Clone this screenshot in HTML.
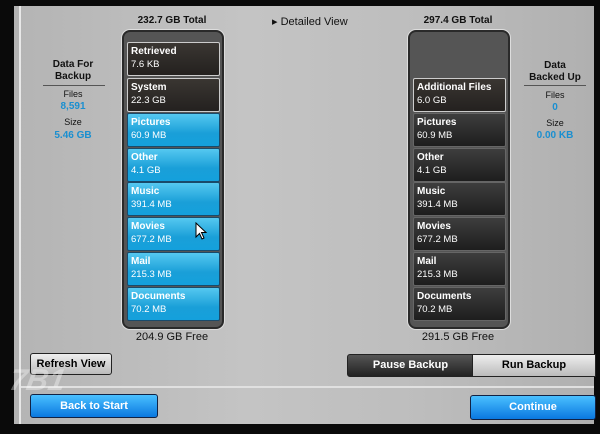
<!DOCTYPE html>
<html><head><style>
body{margin:0;width:600px;height:432px;background:#0a0a0a;position:relative;overflow:hidden;font-family:"Liberation Sans",sans-serif}
.scr{position:absolute;left:14px;top:6px;width:580px;height:418px;background:linear-gradient(90deg,#b4b4b4,#c4c4c4 40%,#bdbdbd 70%,#b0b0b0);}
.edge{position:absolute;left:19px;top:6px;width:2px;height:418px;background:#e8e8e8}
.t{position:absolute;font-size:10px;color:#111;text-align:center}
.b{font-weight:bold}
.blue{color:#1a8fd0;font-weight:bold}
.col{position:absolute;top:30px;width:98px;height:295px;border-radius:8px;background:#555;border:2px solid #2a2a2a;box-shadow:0 0 0 1px #ddd}
.it{position:absolute;left:3px;width:88px;height:30px;border:1px solid #ccc;border-radius:2px;color:#fff;font-size:9.5px;padding-left:3px;line-height:13px;padding-top:2px}
.it b{font-size:10px}
.dk{background:linear-gradient(#3a3632,#24211f)}
.bl{background:linear-gradient(#55c8f0,#1a9fd8 60%,#14a0dc);border-color:#1a4a6a}
.gr{background:linear-gradient(#3e3e3e,#1e1e1e);border-color:#666}
.btn{position:absolute;font-weight:bold;font-size:11px;text-align:center}
</style></head><body>
<div class="scr"></div><div class="edge"></div>
<div class="t b" style="left:122px;top:15px;width:100px">232.7 GB Total</div>
<div class="t" style="left:272px;top:15px;font-size:11px">▸ Detailed View</div>
<div class="t b" style="left:408px;top:15px;width:100px">297.4 GB Total</div>
<div class="t b" style="left:40px;top:59px;width:66px;line-height:12px">Data For<br>Backup</div>
<div style="position:absolute;left:43px;top:85px;width:62px;height:1px;background:#555"></div>
<div class="t" style="left:40px;top:89px;width:66px;font-size:9px">Files</div>
<div class="t blue" style="left:40px;top:101px;width:66px">8,591</div>
<div class="t" style="left:40px;top:117px;width:66px;font-size:9px">Size</div>
<div class="t blue" style="left:40px;top:130px;width:66px">5.46 GB</div>
<div class="t b" style="left:522px;top:60px;width:66px;line-height:12px">Data<br>Backed Up</div>
<div style="position:absolute;left:524px;top:85px;width:62px;height:1px;background:#555"></div>
<div class="t" style="left:522px;top:90px;width:66px;font-size:9px">Files</div>
<div class="t blue" style="left:522px;top:102px;width:66px">0</div>
<div class="t" style="left:522px;top:118px;width:66px;font-size:9px">Size</div>
<div class="t blue" style="left:522px;top:130px;width:66px">0.00 KB</div>
<div class="col" style="left:122px">
<div class="it dk" style="top:10px"><b>Retrieved</b><br>7.6 KB</div>
<div class="it dk" style="top:46px"><b>System</b><br>22.3 GB</div>
<div class="it bl" style="top:81px"><b>Pictures</b><br>60.9 MB</div>
<div class="it bl" style="top:116px"><b>Other</b><br>4.1 GB</div>
<div class="it bl" style="top:150px"><b>Music</b><br>391.4 MB</div>
<div class="it bl" style="top:185px"><b>Movies</b><br>677.2 MB</div>
<div class="it bl" style="top:220px"><b>Mail</b><br>215.3 MB</div>
<div class="it bl" style="top:255px"><b>Documents</b><br>70.2 MB</div>
</div>
<div class="col" style="left:408px">
<div class="it dk" style="top:46px"><b>Additional Files</b><br>6.0 GB</div>
<div class="it gr" style="top:81px"><b>Pictures</b><br>60.9 MB</div>
<div class="it gr" style="top:116px"><b>Other</b><br>4.1 GB</div>
<div class="it gr" style="top:150px"><b>Music</b><br>391.4 MB</div>
<div class="it gr" style="top:185px"><b>Movies</b><br>677.2 MB</div>
<div class="it gr" style="top:220px"><b>Mail</b><br>215.3 MB</div>
<div class="it gr" style="top:255px"><b>Documents</b><br>70.2 MB</div>
</div>
<svg style="position:absolute;left:195px;top:222px" width="14" height="20"><path d="M1 1 L1 15 L4.5 11.5 L7 17 L9 16 L6.5 10.5 L11 10.5 Z" fill="#fff" stroke="#000"/></svg>
<div class="t" style="left:122px;top:331px;width:100px;font-size:11px">204.9 GB Free</div>
<div class="t" style="left:408px;top:331px;width:100px;font-size:11px">291.5 GB Free</div>
<div class="btn" style="left:30px;top:353px;width:80px;height:20px;line-height:20px;border:1px solid #222;border-radius:3px;background:linear-gradient(#eee,#bbb)">Refresh View</div>
<div class="btn" style="left:347px;top:354px;width:125px;height:21px;line-height:21px;border:1px solid #222;border-radius:3px 0 0 3px;background:linear-gradient(#555,#222);color:#fff">Pause Backup</div>
<div class="btn" style="left:472px;top:354px;width:122px;height:21px;line-height:21px;border:1px solid #222;background:linear-gradient(#eee,#bbb)">Run Backup</div>
<div style="position:absolute;left:21px;top:386px;width:573px;height:2px;background:#e0e0e0"></div>
<div class="btn" style="left:30px;top:394px;width:126px;height:22px;line-height:22px;border:1px solid #124;border-radius:3px;background:linear-gradient(#4ac0ff,#0a78e0);color:#fff">Back to Start</div>
<div class="btn" style="left:470px;top:395px;width:124px;height:23px;line-height:23px;border:1px solid #124;border-radius:3px;background:linear-gradient(#4ac0ff,#0a78e0);color:#fff">Continue</div>
<div style="position:absolute;left:0;top:350px;width:70px;height:70px;color:rgba(255,255,255,.35);font:italic bold 30px 'Liberation Sans',sans-serif;transform:skewX(-10deg);padding-top:14px;padding-left:8px">7B1</div>
</body></html>
